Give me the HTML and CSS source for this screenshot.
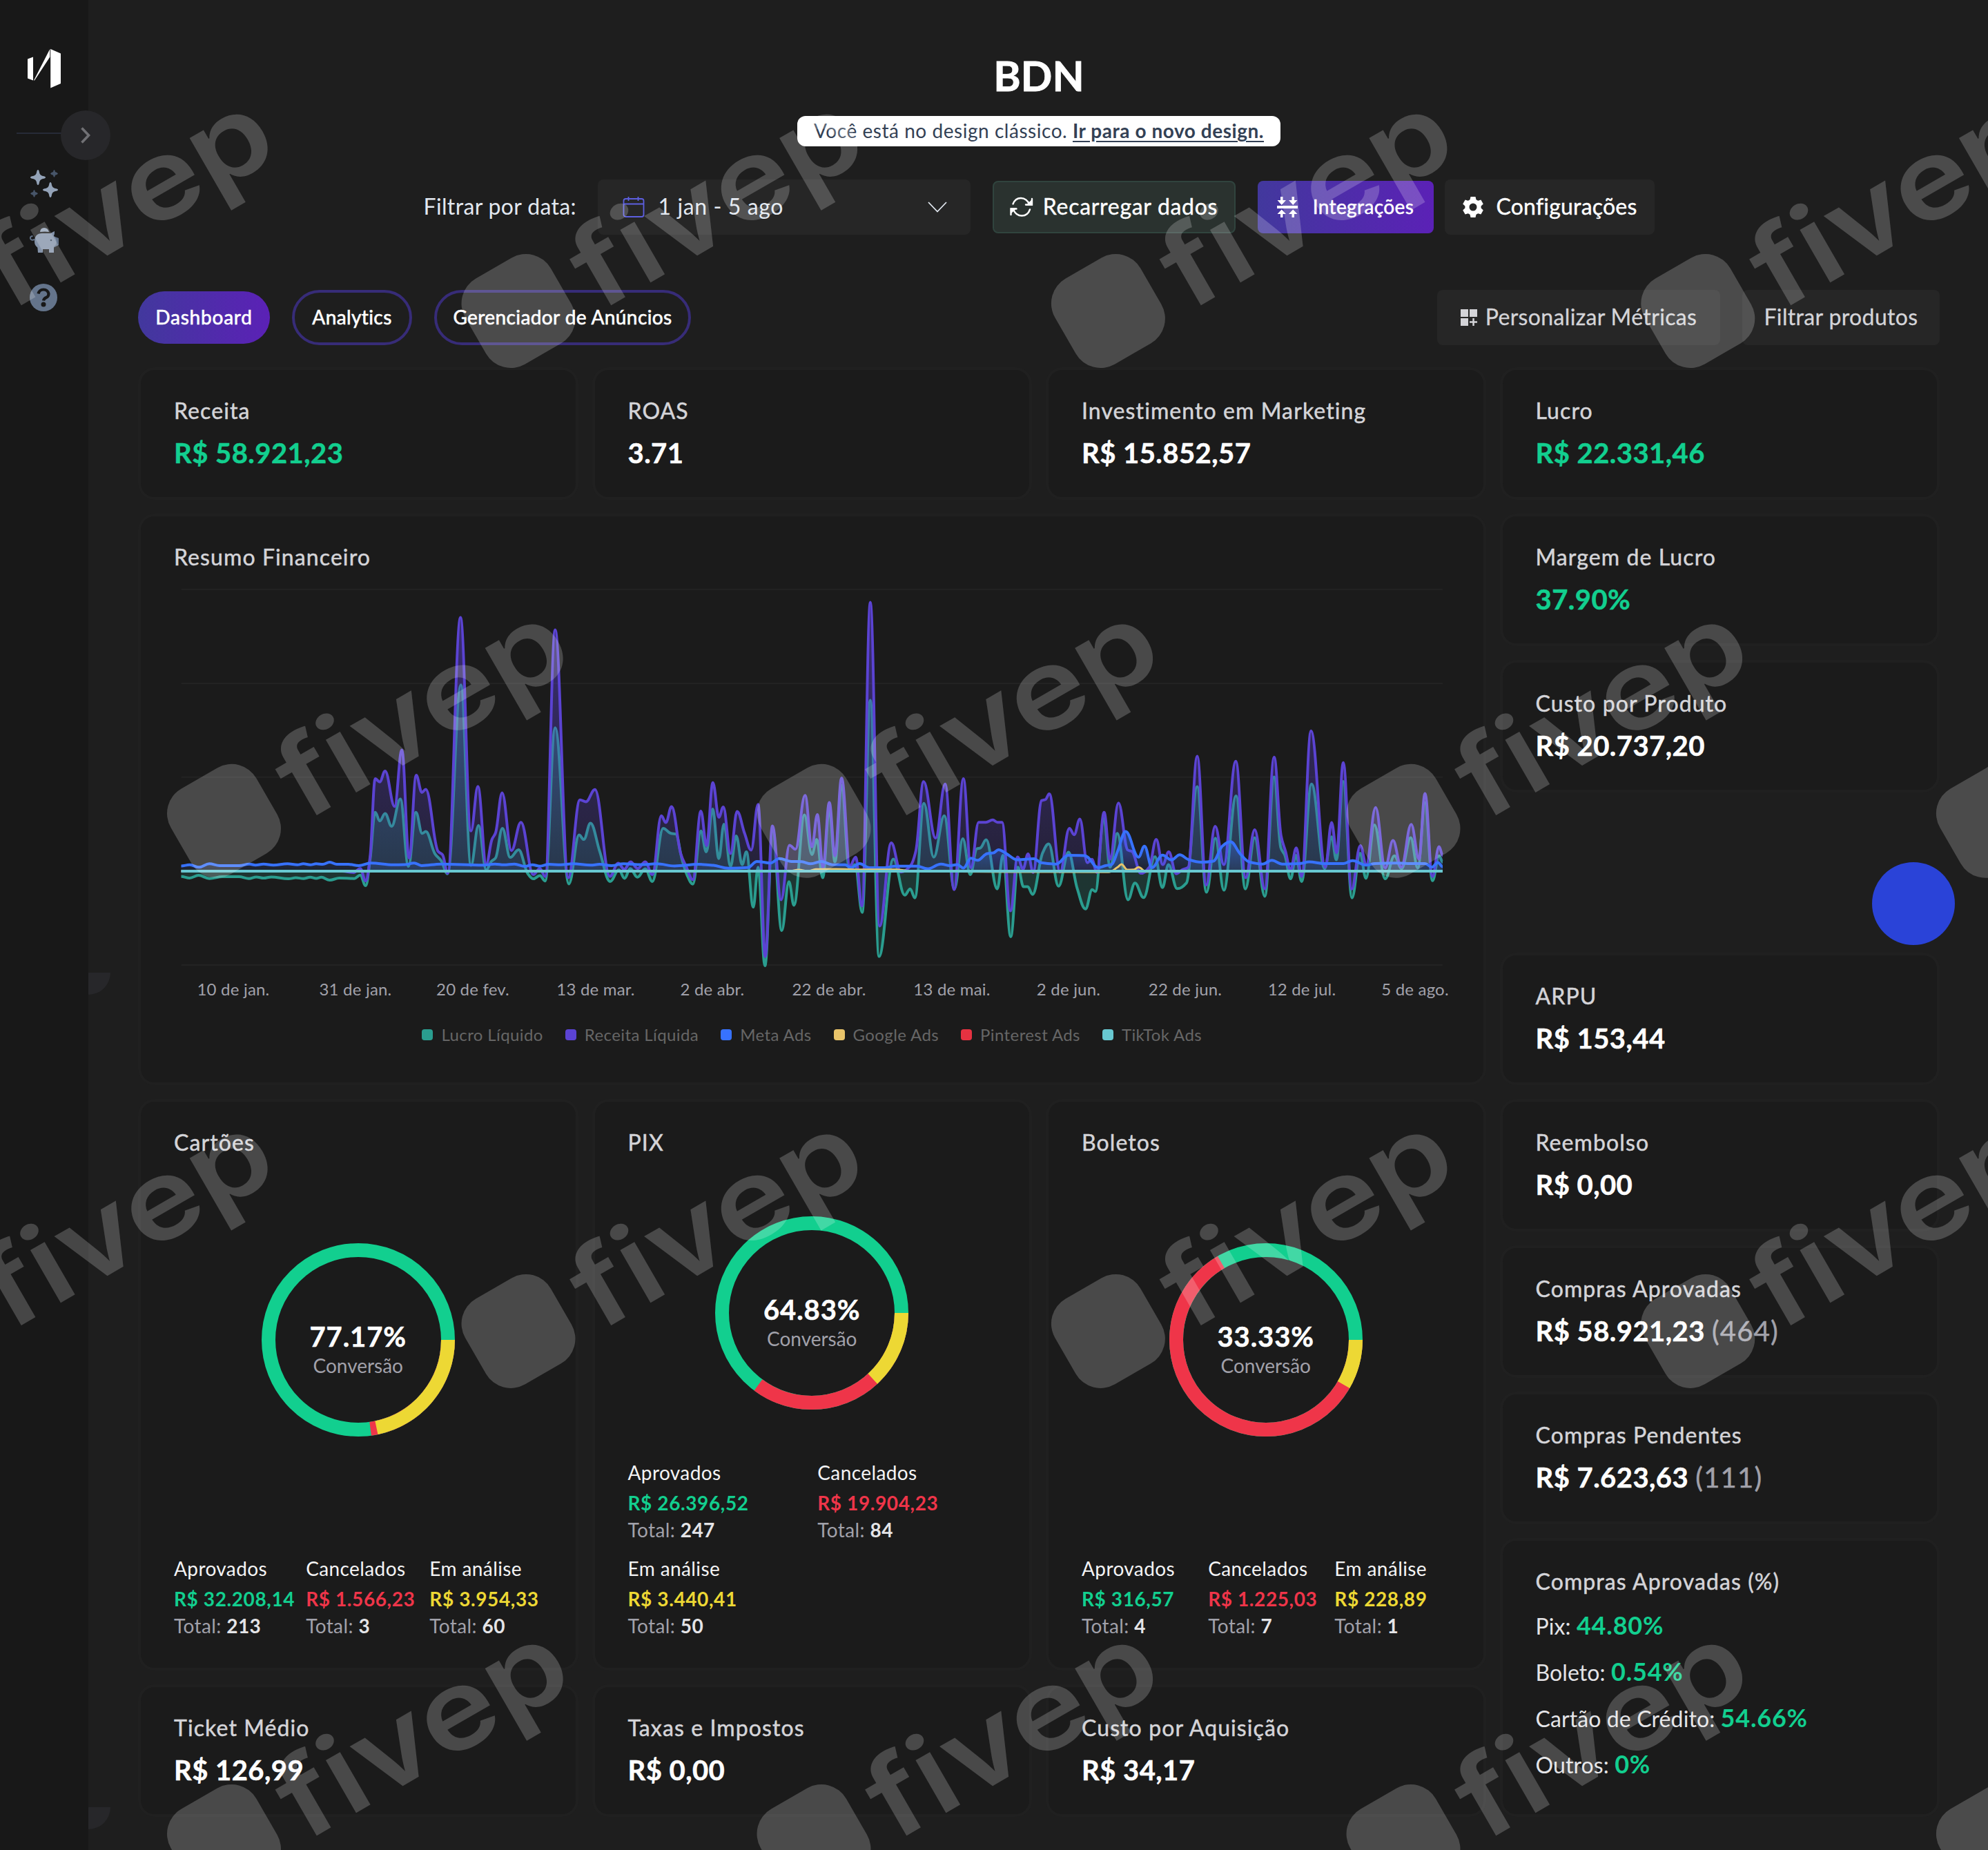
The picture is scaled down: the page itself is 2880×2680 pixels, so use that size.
FILE: index.html
```html
<!DOCTYPE html>
<html lang="pt-BR">
<head>
  <meta charset="UTF-8" />
  <meta name="viewport" content="width=device-width, initial-scale=1.0"/>
  <title>BDN - Dashboard</title>
  <link rel="stylesheet" href="styles.css">
</head>
<body>

<div class="layout">
  <aside class="sidebar">
    <svg class="logo" width="48" height="56" viewBox="0 0 48 56" fill="#fff">
      <path d="M0 14.5 8 11.5V45.500L0 42.500ZM32.300 0V11.500L10 45.500H9ZM33.200 0 48 6.500V50L33.200 56.500Z"/>
    </svg>
    <div class="sidebar-line"></div>
    <nav class="sidebar-nav">
      <svg width="42" height="42" viewBox="0 0 42 42">
        <path fill="#94a3b8" d="M12 1q1.500 0 2 4 .8 4 5 5 4 .6 4 2t-4 2q-4.200 1-5 5-.5 4-2 4t-2-4q-.8-4-5-5-4-.6-4-2t4-2q4.200-1 5-5 .5-4 2-4ZM30 19q1.500 0 2 4 .8 4 5 5 4 .6 4 2t-4 2q-4.200 1-5 5-.5 4-2 4t-2-4q-.8-4-5-5-4-.6-4-2t4-2q4.200-1 5-5 .5-4 2-4Z"/>
        <path fill="#475569" d="M35.500 1q1 0 1.500 3 3 .8 4 2.500-1 1.700-4 2.300-.5 3-1.500 3T34 8.800q-3-.6-4-2.300 1-1.700 4-2.500.5-3 1.500-3ZM6.500 30q1 0 1.500 3 3 .8 4 2.300-1 1.700-4 2.400-.5 3-1.500 3T5 37.700q-3-.7-4-2.400Q2 33.800 5 33q.5-3 1.500-3Z"/>
      </svg>
      <svg width="42" height="42" viewBox="0 0 42 42">
        <path d="M7 20q-5 2-6-1.500Q.5 15 4.500 15" fill="none" stroke="#64748b" stroke-width="2"/>
        <path fill="#64748b" d="M36 13v-5l-5 3ZM34 15l8 3v10l-8 4ZM11 30h8v9h-7Z"/>
        <path fill="#94a3b8" d="M15 9Q15.500 3 21 3t7 6l-6-.6Z"/>
        <path fill="#8493a9" d="M7 23Q7 11 18 11h12l6-3-1 7q4 4 4 9-1 5-4 6v9h-7v-5h-9v5h-7v-7q-5-3-5-9Z"/>
        <circle cx="31" cy="21" r="1.300" fill="#334155"/>
      </svg>
      <svg width="42" height="42" viewBox="0 0 42 42">
        <circle cx="20" cy="22" r="20" fill="#64748b"/>
        <path d="M12.500 16.500Q14 10.500 20 10.500t7.500 6q0 4-3.500 5.500t-4 4.500" fill="none" stroke="#181818" stroke-width="4.200"/>
        <circle cx="20" cy="32" r="3.500" fill="#181818"/>
      </svg>
    </nav>
    <div class="sidebar-toggle">
      <svg width="14" height="24" viewBox="0 0 14 24" fill="none" stroke="#717175" stroke-width="3.600"><path d="M1.500 1.500 11.500 12 1.500 22.500"/></svg>
    </div>
    <span class="corner corner-mid"></span>
    <span class="corner corner-end"></span>
  </aside>

  <main class="main">
    <header class="header">
      <h1>BDN</h1>
      <p class="notice">Você está no design clássico. <a href="#">Ir para o novo design.</a></p>
    </header>

    <div class="toolbar">
      <span class="toolbar-label">Filtrar por data:</span>
      <div class="select">
        <svg width="32" height="32" viewBox="0 0 32 32" fill="none" stroke="#5d5fe0" stroke-width="1.800"><rect x="1.500" y="4" width="29" height="26" rx="3"/><path d="M1.500 11.500h29M8.500 1v6M22.500 1v6"/></svg>
        <span class="label">1 jan - 5 ago</span>
        <svg class="caret" width="28" height="16" viewBox="0 0 28 16" fill="none" stroke="#e2e8f0" stroke-width="1.800"><path d="M1 1 14 14.500 27 1"/></svg>
      </div>
      <button class="btn btn-reload">
        <svg width="34" height="30" viewBox="0 0 34 30" fill="none" stroke="#fff" stroke-width="2.400" stroke-linecap="round"><path d="M4.500 10.500C9-1 23-1 28.500 11.500M32 3v8.500h-9M29 18.500C25 30.500 10 30.500 5 18.500M1.500 26v-8.500h8"/><path fill="#fff" stroke="none" d="M23 12.500h10V3ZM1 16.500h9L1 25Z"/></svg>
        <span class="label">Recarregar dados</span>
      </button>
      <button class="btn btn-primary">
        <svg width="30" height="30" viewBox="0 0 30 30" fill="#fff"><path d="M0 13h30v4H0ZM5 0h3.500v5H13L6.700 12 .5 5H5ZM21.500 0H25v5h4.500l-6.300 7L17 5h4.500ZM6.700 18.500 13 25H8.500v5H5v-5H.5ZM23.200 18.500l6.300 6.500H25v5h-3.500v-5H17Z"/></svg>
        <span class="label">Integrações</span>
      </button>
      <button class="btn btn-config">
        <svg width="32" height="32" viewBox="0 0 32 32" fill="#fff" fill-rule="evenodd"><path d="M12.500 1h7l1 4.300 2.700 1.500 4.200-1.300 3.400 6-3.200 3v3l3.200 3-3.400 6-4.200-1.300-2.700 1.500-1 4.300h-7l-1-4.300-2.700-1.500-4.200 1.300-3.400-6 3.200-3v-3l-3.200-3 3.400-6 4.200 1.300 2.700-1.500ZM16 10.500a5.500 5.500 0 1 0 0 11 5.500 5.500 0 0 0 0-11Z"/></svg>
        <span class="label">Configurações</span>
      </button>
    </div>

    <div class="tabs-row">
      <div class="tabs">
        <a class="tab active">Dashboard</a>
        <a class="tab tab-analytics">Analytics</a>
        <a class="tab tab-ads">Gerenciador de Anúncios</a>
      </div>
      <div class="actions">
        <button class="btn btn-metrics">
          <svg width="24" height="24" viewBox="0 0 24 24" fill="#d4d4d8"><path d="M0 0h11v11H0ZM13 0h11v11H13ZM0 13h11v11H0ZM17.300 13h2.500v4.300H24v2.500h-4.200V24h-2.500v-4.200H13v-2.500h4.300Z"/></svg>
          <span class="label">Personalizar Métricas</span>
        </button>
        <button class="btn btn-products"><span class="label">Filtrar produtos</span></button>
      </div>
    </div>

    <div class="grid">
      <div class="card"><h2>Receita</h2><p class="value green">R$ 58.921,23</p></div>
      <div class="card"><h2>ROAS</h2><p class="value">3.71</p></div>
      <div class="card"><h2>Investimento em Marketing</h2><p class="value">R$ 15.852,57</p></div>
      <div class="card"><h2>Lucro</h2><p class="value green">R$ 22.331,46</p></div>

      <div class="card card-chart">
        <h2>Resumo Financeiro</h2>
        <svg id="chart" width="1900" height="624" viewBox="0 0 1900 624"></svg>
        <div class="legend">
          <span><i class="dot teal"></i>Lucro Líquido</span>
          <span><i class="dot purple"></i>Receita Líquida</span>
          <span><i class="dot blue"></i>Meta Ads</span>
          <span><i class="dot sand"></i>Google Ads</span>
          <span><i class="dot crimson"></i>Pinterest Ads</span>
          <span><i class="dot cyan"></i>TikTok Ads</span>
        </div>
      </div>
      <div class="card"><h2>Margem de Lucro</h2><p class="value green">37.90%</p></div>
      <div class="card"><h2>Custo por Produto</h2><p class="value">R$ 20.737,20</p></div>
      <div class="empty"></div>
      <div class="card"><h2>ARPU</h2><p class="value">R$ 153,44</p></div>

      <div class="card card-donut">
        <h2>Cartões</h2>
        <div class="donut">
          <svg width="280" height="280" viewBox="0 0 280 280" fill="none" stroke-width="20">
            <circle cx="140" cy="140" r="130" stroke="#12cf8f"/>
            <circle cx="140" cy="140" r="130" stroke="#ef3549" pathLength="100" stroke-dasharray="22.830 100"/>
            <circle cx="140" cy="140" r="130" stroke="#edd834" pathLength="100" stroke-dasharray="21.740 100"/>
          </svg>
          <div class="donut-text"><b>77.17%</b><span>Conversão</span></div>
        </div>
        <div class="stats">
          <div><p>Aprovados</p><p class="amount green">R$ 32.208,14</p><p class="total">Total: <b>213</b></p></div>
          <div><p>Cancelados</p><p class="amount red">R$ 1.566,23</p><p class="total">Total: <b>3</b></p></div>
          <div><p>Em análise</p><p class="amount yellow">R$ 3.954,33</p><p class="total">Total: <b>60</b></p></div>
        </div>
      </div>

      <div class="card card-donut">
        <h2>PIX</h2>
        <div class="donut donut-high">
          <svg width="280" height="280" viewBox="0 0 280 280" fill="none" stroke-width="20">
            <circle cx="140" cy="140" r="130" stroke="#12cf8f"/>
            <circle cx="140" cy="140" r="130" stroke="#ef3549" pathLength="100" stroke-dasharray="35.170 100"/>
            <circle cx="140" cy="140" r="130" stroke="#edd834" pathLength="100" stroke-dasharray="13.120 100"/>
          </svg>
          <div class="donut-text"><b>64.83%</b><span>Conversão</span></div>
        </div>
        <div class="stats stats-two">
          <div><p>Aprovados</p><p class="amount green">R$ 26.396,52</p><p class="total">Total: <b>247</b></p></div>
          <div><p>Cancelados</p><p class="amount red">R$ 19.904,23</p><p class="total">Total: <b>84</b></p></div>
          <div><p>Em análise</p><p class="amount yellow">R$ 3.440,41</p><p class="total">Total: <b>50</b></p></div>
        </div>
      </div>

      <div class="card card-donut">
        <h2>Boletos</h2>
        <div class="donut">
          <svg width="280" height="280" viewBox="0 0 280 280" fill="none" stroke-width="20">
            <circle cx="140" cy="140" r="130" stroke="#12cf8f"/>
            <circle cx="140" cy="140" r="130" stroke="#ef3549" pathLength="100" stroke-dasharray="66.670 100"/>
            <circle cx="140" cy="140" r="130" stroke="#edd834" pathLength="100" stroke-dasharray="8.330 100"/>
          </svg>
          <div class="donut-text"><b>33.33%</b><span>Conversão</span></div>
        </div>
        <div class="stats">
          <div><p>Aprovados</p><p class="amount green">R$ 316,57</p><p class="total">Total: <b>4</b></p></div>
          <div><p>Cancelados</p><p class="amount red">R$ 1.225,03</p><p class="total">Total: <b>7</b></p></div>
          <div><p>Em análise</p><p class="amount yellow">R$ 228,89</p><p class="total">Total: <b>1</b></p></div>
        </div>
      </div>

      <div class="card"><h2>Reembolso</h2><p class="value">R$ 0,00</p></div>
      <div class="card"><h2>Compras Aprovadas</h2><p class="value">R$ 58.921,23 <span>(464)</span></p></div>
      <div class="card"><h2>Compras Pendentes</h2><p class="value">R$ 7.623,63 <span>(111)</span></p></div>
      <div class="card card-share">
        <h2>Compras Aprovadas (%)</h2>
        <ul>
          <li>Pix: <b>44.80%</b></li>
          <li>Boleto: <b>0.54%</b></li>
          <li>Cartão de Crédito: <b>54.66%</b></li>
          <li>Outros: <b>0%</b></li>
        </ul>
      </div>

      <div class="card"><h2>Ticket Médio</h2><p class="value">R$ 126,99</p></div>
      <div class="card"><h2>Taxas e Impostos</h2><p class="value">R$ 0,00</p></div>
      <div class="card"><h2>Custo por Aquisição</h2><p class="value">R$ 34,17</p></div>
    </div>
  </main>
</div>

<div class="chat-bubble"></div>

<!-- watermark -->
<svg class="watermark" width="2880" height="2680" viewBox="0 0 2880 2680" fill="#fff">
  <defs>
    <g id="mark">
      <g transform="rotate(-30)">
        <rect x="-71.500" y="-71.500" width="143" height="143" rx="41.500"/>
        <text x="100" y="60" textLength="457" lengthAdjust="spacingAndGlyphs">fivep</text>
      </g>
    </g>
  </defs>
  <use href="#mark" x="-103.500" y="450.500"/>
  <use href="#mark" x="751" y="450.500"/>
  <use href="#mark" x="1605.400" y="450.500"/>
  <use href="#mark" x="2459.800" y="450.500"/>
  <use href="#mark" x="324.500" y="1189.300"/>
  <use href="#mark" x="1179" y="1189.300"/>
  <use href="#mark" x="2033" y="1189.300"/>
  <use href="#mark" x="2887.400" y="1189.300"/>
  <use href="#mark" x="-103.500" y="1928.400"/>
  <use href="#mark" x="751" y="1928.400"/>
  <use href="#mark" x="1605.400" y="1928.400"/>
  <use href="#mark" x="2459.800" y="1928.400"/>
  <use href="#mark" x="324.500" y="2667.500"/>
  <use href="#mark" x="1179" y="2667.500"/>
  <use href="#mark" x="2033" y="2667.500"/>
  <use href="#mark" x="2887.400" y="2667.500"/>
</svg>

<script src="chart.js"></script>
</body>
</html>
```

FILE: styles.css
```css
* {
  box-sizing: border-box;
}
body {
  font-family: Lato, "Open Sans", sans-serif;
  background: #1e1e1e;
  color: #fff;
  margin: 0;
  font-size: 32px;
  width: 2880px;
  height: 2680px;
  position: relative;
  overflow: hidden;
}
h1, h2, p, ul {
  margin: 0;
  padding: 0;
}
.layout {
  display: flex;
  height: 2680px;
}

/* sidebar */
.sidebar {
  width: 128px;
  background: #181818;
  position: relative;
  display: flex;
  flex-direction: column;
  flex-shrink: 0;
}
.logo {
  margin: 71px 0 0 40px;
  overflow: visible;
}
.sidebar-line {
  height: 2px;
  background: #272b38;
  margin: 65px 24px 0;
}
.sidebar-nav {
  display: flex;
  flex-direction: column;
  gap: 40px;
  margin: 51px 0 0 43px;
}
.sidebar-toggle {
  position: absolute;
  left: 88px;
  top: 160px;
  width: 72px;
  height: 72px;
  border-radius: 50%;
  background: #27272a;
  display: flex;
  align-items: center;
  justify-content: center;
}
.corner {
  position: absolute;
  left: 128px;
  width: 32px;
  height: 32px;
  background: #27272a;
  border-radius: 0 0 100% 0;
}
.corner-mid {
  top: 1409px;
}
.corner-end {
  top: 2618px;
}

/* header */
.main {
  flex: 1;
  padding: 69px 72px 48px;
}
.header {
  display: flex;
  flex-direction: column;
  align-items: center;
}
h1 {
  font-size: 60px;
  line-height: 80px;
  font-weight: 700;
  -webkit-text-stroke: 0.8px;
}
.notice {
  margin-top: 19px;
  width: 700px;
  height: 44px;
  line-height: 42px;
  text-align: center;
  background: #fff;
  border-radius: 12px;
  color: #334155;
  font-size: 28px;
  letter-spacing: 0.54px;
  white-space: nowrap;
}
.notice a {
  color: #334155;
  font-weight: 700;
  text-underline-offset: 4px;
}

/* toolbar */
.toolbar {
  display: flex;
  justify-content: center;
  align-items: center;
  height: 80px;
  margin-top: 48px;
  color: #e2e8f0;
}
.toolbar-label {
  width: 220px;
  margin-right: 32px;
  padding-bottom: 3px;
  letter-spacing: 0.35px;
  white-space: nowrap;
}
.select {
  width: 540px;
  height: 80px;
  margin-right: 32px;
  padding: 0 34px 0 36px;
  border-radius: 8px;
  background: #262626;
  display: flex;
  align-items: center;
  gap: 20px;
  letter-spacing: 0.6px;
}
.label {
  padding-bottom: 3px;
}
.caret {
  margin-left: auto;
}
.btn {
  font-family: inherit;
  font-size: 32px;
  height: 80px;
  border: none;
  border-radius: 8px;
  background: #262626;
  color: #fff;
  padding: 0;
  display: flex;
  align-items: center;
  justify-content: center;
  white-space: nowrap;
}
.btn-reload {
  width: 352px;
  height: 76px;
  border: 2px solid #30443e;
  background: #2a322f;
  gap: 14px;
  margin-right: 32px;
  letter-spacing: 0.7px;
  -webkit-text-stroke: 0.4px;
}
.btn-primary {
  width: 255px;
  height: 76px;
  font-size: 28px;
  gap: 22px;
  background: linear-gradient(90deg, #42389d, #5b21b6);
  margin-right: 16px;
  letter-spacing: 0.4px;
  -webkit-text-stroke: 0.5px;
}
.btn-config {
  width: 304px;
  gap: 18px;
  letter-spacing: 0.2px;
  -webkit-text-stroke: 0.4px;
}

/* tabs */
.tabs-row {
  display: flex;
  justify-content: space-between;
  margin-top: 80px;
}
.tabs, .actions {
  display: flex;
  align-items: center;
  gap: 32px;
}
.tab {
  height: 80px;
  border: 4px solid #372c78;
  border-radius: 40px;
  padding-bottom: 2px;
  font-size: 28px;
  letter-spacing: 0.4px;
  -webkit-text-stroke: 0.6px;
  display: flex;
  align-items: center;
  justify-content: center;
  white-space: nowrap;
}
.tab.active {
  width: 191px;
  height: 76px;
  border: none;
  letter-spacing: 0.8px;
  background: linear-gradient(90deg, #42389d, #5b21b6);
}
.tab-analytics {
  width: 174px;
}
.tab-ads {
  width: 372px;
}
.actions .btn {
  color: #d4d4d8;
  letter-spacing: 0.35px;
  -webkit-text-stroke: 0.3px;
}
.btn-metrics {
  width: 410px;
  gap: 12px;
}
.btn-products {
  width: 286px;
}

/* cards */
.grid {
  display: grid;
  grid-template-columns: repeat(4, 637.5px);
  grid-template-rows: repeat(10, 192px);
  gap: 20px;
  margin-top: 32px;
}
.card {
  background: #1b1b1b;
  border: 4px solid #202020;
  border-radius: 24px;
  padding: 35px 48px 42px;
}
h2 {
  font-size: 32px;
  line-height: 48px;
  font-weight: 400;
  color: #d4d4d8;
  letter-spacing: 1.1px;
  -webkit-text-stroke: 0.5px;
  white-space: nowrap;
}
.value {
  font-size: 40px;
  line-height: 56px;
  font-weight: 700;
  margin-top: 9px;
  letter-spacing: 0.45px;
  -webkit-text-stroke: 0.5px;
  white-space: nowrap;
}
.value span {
  font-weight: 400;
  letter-spacing: 1.2px;
  color: #a1a1aa;
}
.green {
  color: #12cf8f;
}
.red {
  color: #ef3549;
}
.yellow {
  color: #edd834;
}
.card-chart {
  grid-column: 1 / 4;
  grid-row: 2 / 6;
}
#chart {
  display: block;
  margin-top: -3px;
  overflow: visible;
}
#chart text {
  font-size: 24px;
  letter-spacing: 0.2px;
  fill: #a1a1aa;
  text-anchor: middle;
}
.legend {
  display: flex;
  justify-content: center;
  gap: 32px;
  margin-top: 31px;
  font-size: 24px;
  line-height: 32px;
  letter-spacing: 0.4px;
  color: #666;
}
.legend span {
  display: flex;
  align-items: center;
  gap: 12px;
}
.dot {
  width: 16px;
  height: 16px;
  border-radius: 4px;
}
.teal { background: #2a9d8f; }
.purple { background: #5b43d3; }
.blue { background: #3772ff; }
.sand { background: #e9c46a; }
.crimson { background: #e63241; }
.cyan { background: #68c8d1; }

/* donut cards */
.card-donut {
  grid-row: 6 / 10;
  display: flex;
  flex-direction: column;
}
.donut {
  position: relative;
  width: 280px;
  height: 280px;
  margin: 122px auto 0;
}
.donut-high {
  margin-top: 83px;
}
.donut svg {
  display: block;
}
.donut-text {
  position: absolute;
  inset: 0;
  display: flex;
  flex-direction: column;
  align-items: center;
  padding-top: 107px;
}
.donut-text b {
  font-size: 40px;
  line-height: 56px;
  letter-spacing: 0.9px;
  -webkit-text-stroke: 0.5px;
}
.donut-text span {
  font-size: 28px;
  line-height: 28px;
  color: #a1a1aa;
}
.stats {
  margin-top: auto;
  display: grid;
  grid-template-columns: repeat(3, 1fr);
  gap: 13px 16px;
  font-size: 28px;
  letter-spacing: 0.4px;
  white-space: nowrap;
  color: #f4f4f5;
}
.stats-two {
  grid-template-columns: repeat(2, 1fr);
}
.stats p {
  line-height: 48px;
}
.stats .amount {
  line-height: 40px;
  font-weight: 700;
  letter-spacing: 0.6px;
}
.stats .total {
  line-height: 38px;
  color: #a1a1aa;
}
.stats .total b {
  color: #e4e4e7;
}
.card-share {
  grid-row: 9 / 11;
}
.card-share ul {
  list-style: none;
  margin-top: 7px;
}
.card-share li {
  height: 67px;
  line-height: 67px;
  letter-spacing: 0.1px;
  color: #e4e4e7;
}
.card-share b {
  font-size: 36px;
  line-height: 1;
  letter-spacing: 0.8px;
  color: #12cf8f;
}

.chat-bubble {
  position: absolute;
  right: 48px;
  top: 1249px;
  width: 120px;
  height: 120px;
  border-radius: 50%;
  background: #2a43d8;
}
.watermark {
  position: absolute;
  left: 0;
  top: 0;
  opacity: 0.2;
  pointer-events: none;
}
.watermark text {
  font-family: Inter, sans-serif;
  font-weight: 600;
  font-size: 161px;
}
```

FILE: chart.js
```js
// plot units: x 52..4266, zero line at y 1155
const KX = 2.306, KY = 2.613, OFF_X = 12, OFF_Y = 8;
const px = x => x / KX - OFF_X;
const py = y => y / KY - OFF_Y;
const ZERO = py(1155);

const receita = [[52,1155],[590,1155],[628,1160],[650,1145],[668,1192],[683,1100],[700,805],[715,817],[733,776],[765,910],[789,696],[813,1105],[837,792],[856,857],[869,845],[910,1080],[925,1093],[942,1163],[985,195],[1020,1003],[1043,834],[1071,1128],[1090,1035],[1102,1010],[1124,858],[1155,1077],[1187,970],[1228,1168],[1250,1145],[1268,1175],[1301,242],[1345,1180],[1384,885],[1404,892],[1434,846],[1484,1175],[1512,1125],[1532,1148],[1553,1120],[1577,1145],[1602,1120],[1626,1168],[1656,945],[1671,971],[1690,911],[1721,1090],[1738,1135],[1761,1187],[1788,928],[1807,1058],[1828,820],[1848,951],[1863,912],[1887,1088],[1909,929],[1934,1012],[1956,1075],[1979,902],[2003,1478],[2027,984],[2056,1263],[2084,1057],[2104,1072],[2136,868],[2159,1063],[2177,941],[2196,1140],[2217,895],[2236,1097],[2258,802],[2286,1135],[2305,1102],[2326,1287],[2354,137],[2385,1363],[2424,1048],[2456,1158],[2488,1135],[2506,1080],[2532,816],[2572,1030],[2604,825],[2634,1225],[2665,805],[2690,1142],[2716,970],[2740,970],[2763,961],[2779,970],[2794,970],[2822,1305],[2846,1101],[2864,1147],[2881,1090],[2898,1160],[2926,888],[2939,884],[2952,862],[2988,1158],[3019,993],[3035,1017],[3054,958],[3079,1123],[3094,1110],[3111,1160],[3135,932],[3155,1110],[3183,897],[3214,1075],[3228,1080],[3258,1163],[3286,1140],[3309,1035],[3331,1130],[3351,1082],[3376,1165],[3396,1150],[3416,1140],[3446,720],[3476,1208],[3506,985],[3535,1130],[3575,739],[3608,1180],[3638,998],[3672,1222],[3703,723],[3726,1020],[3741,1080],[3758,1150],[3777,1067],[3795,1175],[3826,624],[3874,1140],[3895,971],[3912,1085],[3934,744],[3962,1223],[3991,1058],[4011,1130],[4042,914],[4074,1143],[4100,1039],[4128,1140],[4161,978],[4187,1110],[4207,861],[4232,1175],[4254,1062],[4266,1095]];

const lucro = [[52,1175],[80,1181],[110,1171],[146,1183],[190,1176],[245,1176],[278,1183],[303,1177],[327,1181],[353,1177],[410,1184],[435,1180],[460,1183],[483,1178],[503,1182],[520,1178],[548,1189],[580,1181],[630,1183],[650,1170],[668,1210],[683,1110],[700,932],[715,965],[733,937],[755,985],[784,882],[811,1137],[836,932],[857,1012],[869,1005],[900,1090],[920,1115],[942,1165],[986,450],[1020,1133],[1045,982],[1071,1150],[1088,1118],[1102,1105],[1125,993],[1151,1103],[1179,1074],[1210,1165],[1228,1184],[1250,1172],[1268,1192],[1301,612],[1347,1203],[1381,1018],[1397,1035],[1419,973],[1450,1080],[1485,1194],[1514,1150],[1533,1182],[1552,1145],[1576,1178],[1602,1146],[1626,1194],[1662,993],[1688,1012],[1704,1014],[1725,1110],[1742,1170],[1761,1204],[1788,1003],[1806,1082],[1827,920],[1848,1107],[1865,977],[1887,1137],[1906,1022],[1926,1130],[1940,1082],[1963,1291],[1979,1140],[2002,1513],[2028,1000],[2058,1380],[2082,1195],[2099,1284],[2134,942],[2159,1092],[2175,1035],[2195,1180],[2217,920],[2236,1120],[2258,830],[2284,1145],[2303,1130],[2327,1311],[2354,508],[2383,1478],[2431,1109],[2469,1246],[2487,1222],[2503,1256],[2533,898],[2566,1102],[2601,945],[2635,1222],[2663,1032],[2688,1168],[2710,1070],[2722,1067],[2741,1036],[2778,1222],[2797,1095],[2823,1403],[2847,1140],[2866,1214],[2880,1214],[2896,1243],[2930,1085],[2950,1052],[2983,1212],[3016,1083],[3045,1220],[3073,1298],[3095,1225],[3106,1232],[3134,955],[3155,1140],[3179,1012],[3215,1263],[3238,1200],[3267,1255],[3305,1100],[3330,1217],[3350,1130],[3379,1221],[3410,1200],[3446,835],[3477,1235],[3507,1030],[3535,1227],[3576,870],[3607,1222],[3638,1028],[3672,1250],[3703,798],[3725,1065],[3739,1095],[3758,1184],[3776,1095],[3795,1194],[3828,825],[3872,1145],[3895,1025],[3911,1112],[3934,815],[3963,1256],[3990,1087],[4010,1182],[4038,980],[4074,1184],[4105,1097],[4129,1145],[4159,1028],[4183,1143],[4207,895],[4232,1191],[4254,1097],[4266,1120]];

const meta = [[52,1135],[80,1131],[112,1140],[146,1127],[180,1134],[245,1134],[280,1128],[300,1132],[327,1128],[360,1132],[407,1127],[440,1131],[460,1127],[483,1131],[503,1127],[525,1129],[548,1121],[572,1129],[610,1129],[645,1134],[685,1124],[760,1131],[800,1130],[830,1124],[855,1134],[920,1128],[1060,1132],[1100,1128],[1130,1131],[1165,1128],[1200,1137],[1225,1131],[1250,1136],[1280,1129],[1320,1131],[1360,1127],[1420,1132],[1450,1129],[1490,1134],[1530,1127],[1590,1130],[1640,1127],[1700,1135],[1780,1129],[1830,1133],[1880,1144],[1945,1141],[1975,1118],[2020,1124],[2050,1107],[2090,1118],[2125,1119],[2155,1127],[2190,1118],[2225,1130],[2270,1131],[2290,1142],[2318,1126],[2350,1142],[2400,1142],[2440,1136],[2510,1136],[2545,1146],[2590,1128],[2620,1134],[2645,1130],[2665,1143],[2690,1106],[2712,1114],[2745,1088],[2765,1086],[2782,1074],[2810,1090],[2845,1112],[2900,1108],[2925,1123],[2975,1128],[3015,1095],[3070,1096],[3116,1142],[3140,1134],[3160,1130],[3180,1080],[3207,1005],[3250,1102],[3270,1060],[3295,1142],[3330,1094],[3360,1112],[3388,1093],[3415,1110],[3460,1121],[3500,1117],[3530,1060],[3557,1043],[3590,1090],[3620,1120],[3665,1128],[3695,1114],[3730,1128],[3790,1126],[3820,1120],[3870,1126],[3935,1126],[3965,1115],[4010,1132],[4040,1126],[4110,1124],[4150,1126],[4207,1126],[4230,1140],[4250,1122],[4266,1138]];

const google = [[52,1155],[2084,1155],[2115,1150],[2145,1155],[2172,1148],[2240,1147],[2300,1149],[2440,1149],[2490,1155],[3150,1158],[3180,1140],[3193,1129],[3213,1150],[3235,1149],[3250,1140],[3275,1157],[3300,1155],[4266,1155]];

// monotone cubic curve, flat at every peak and valley
function curve(points) {
  const p = points.map(([x, y]) => [px(x), py(y)]);
  const n = p.length;
  const s = [];
  for (let i = 0; i < n - 1; i++) s.push((p[i + 1][1] - p[i][1]) / (p[i + 1][0] - p[i][0]));
  const m = p.map((_, i) => {
    if (i === 0 || i === n - 1) return 0;
    return s[i - 1] * s[i] <= 0 ? 0 : 2 * s[i - 1] * s[i] / (s[i - 1] + s[i]);
  });
  let d = `M${p[0][0].toFixed(1)} ${p[0][1].toFixed(1)}`;
  for (let i = 0; i < n - 1; i++) {
    const dx = (p[i + 1][0] - p[i][0]) / 2.6;
    d += `C${[p[i][0] + dx, p[i][1] + m[i] * dx, p[i + 1][0] - dx, p[i + 1][1] - m[i + 1] * dx, p[i + 1][0], p[i + 1][1]].map(v => v.toFixed(1)).join(' ')}`;
  }
  return d;
}

function series(points, id, color, width) {
  const d = curve(points);
  return `<path d="${d}V${ZERO}H${px(52)}Z" fill="url(#${id})"/><path d="${d}" fill="none" stroke="${color}" stroke-width="${width}" stroke-linejoin="round"/>`;
}

function gradient(id, color, y1, from, to) {
  return `<linearGradient id="${id}" gradientUnits="userSpaceOnUse" x1="0" x2="0" y1="${py(y1)}" y2="${ZERO}"><stop stop-color="${color}" stop-opacity="${from}"/><stop offset="1" stop-color="${color}" stop-opacity="${to}"/></linearGradient>`;
}

let out = '<defs>' + gradient('gl', '#2a9d8f', 450, 0.45, 0.2) + gradient('gr', '#5b43d3', 137, 0.5, 0.16) + gradient('gm', '#3772ff', 1005, 0.5, 0.08) + gradient('gg', '#e9c46a', 1128, 0.3, 0) + '</defs>';
[88, 444, 799, 1155, 1510].forEach(y => {
  out += `<path d="M${px(52)} ${py(y)}H${px(4266)}" stroke="#232323" stroke-width="2"/>`;
});
out += series(lucro, 'gl', '#2a9d8f', 4);
out += series(receita, 'gr', '#5b43d3', 4);
out += series(meta, 'gm', '#3772ff', 4);
out += series(google, 'gg', '#e9c46a', 3);
out += `<path d="M${px(52)} ${ZERO}H${px(4266)}" stroke="#68c8d1" stroke-width="4"/>`;

const labels = ['10 de jan.', '31 de jan.', '20 de fev.', '13 de mar.', '2 de abr.', '22 de abr.', '13 de mai.', '2 de jun.', '22 de jun.', '12 de jul.', '5 de ago.'];
const ticks = [86, 263, 433, 611, 780, 949, 1127, 1296, 1465, 1634, 1798];
labels.forEach((t, i) => { out += `<text x="${ticks[i]}" y="614">${t}</text>`; });

document.getElementById('chart').innerHTML = out;
```
